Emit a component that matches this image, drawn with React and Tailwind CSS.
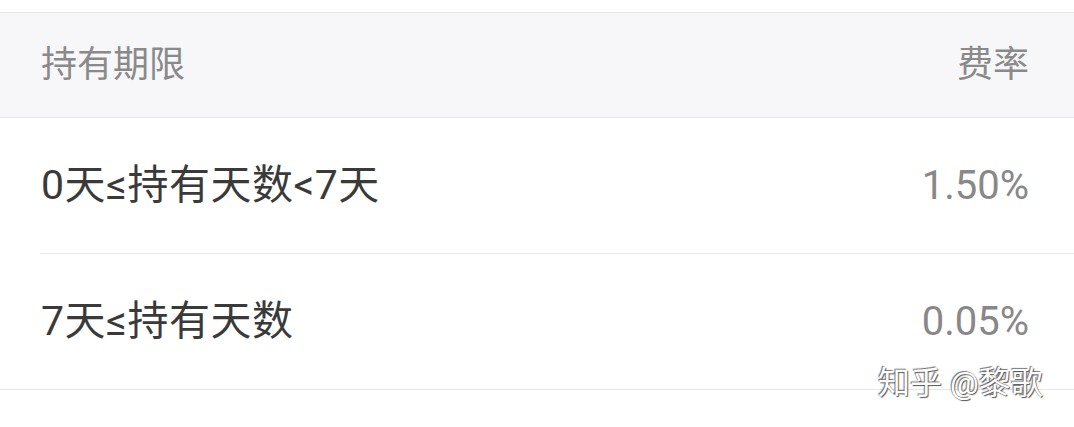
import React from "react";

const rows = [
  { term: "0天≤持有天数<7天", rate: "1.50%" },
  { term: "7天≤持有天数", rate: "0.05%" },
];

const App = () => {
  return (
    <div className="relative w-[1074px] h-[427px] bg-white font-['Roboto','Noto_Sans_CJK_SC',sans-serif] overflow-hidden">
      <div className="h-[12px]" />
      <div className="flex items-center justify-between h-[106px] px-[41px] bg-[#f7f7f9] border-y border-[#e6e6e8] text-[36px] text-[#8a8a8a]">
        <span>持有期限</span>
        <span className="mr-[4px]">费率</span>
      </div>
      {rows.map((row, i) => (
        <div
          key={i}
          className={`flex items-center justify-between h-[136px] pr-[45px] ${
            i === rows.length - 1 ? "border-b border-[#e6e6e6] pl-[41px]" : "ml-[40px] border-b border-[#e8e8e8] pl-[1px]"
          }`}
        >
          <span className="text-[41px] tracking-[0.5px] text-[#3a3a3a]">{row.term}</span>
          <span className="text-[40px] text-[#888888]">{row.rate}</span>
        </div>
      ))}
      <div className="absolute left-[878px] top-[359px] text-[32px] text-white [text-shadow:1px_1px_1px_#555,-1px_-1px_1px_#777]">
        知乎 @黎歌
      </div>
    </div>
  );
};

export default App;
